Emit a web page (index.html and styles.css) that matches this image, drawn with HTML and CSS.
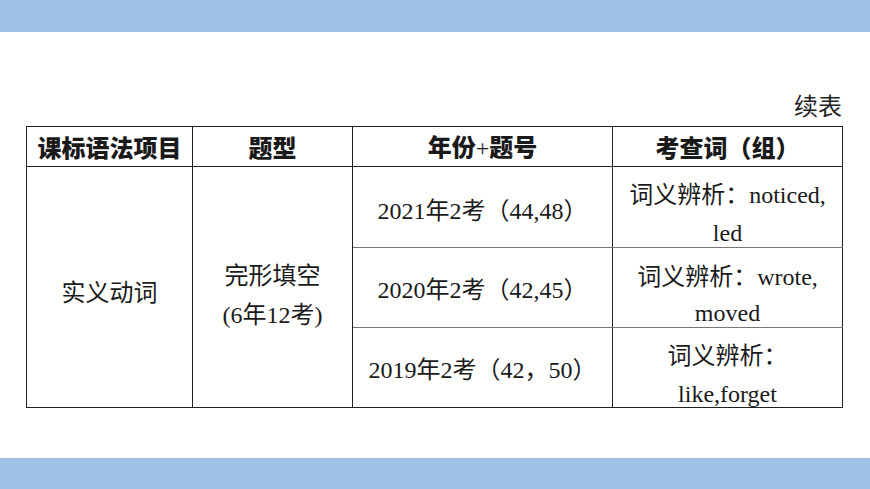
FILE: index.html
```html
<!DOCTYPE html>
<html lang="en">
<head>
<meta charset="utf-8">
<link rel="stylesheet" href="styles.css">
</head>
<body>
<div class="page">
  <div class="bar bar-top"></div>
  <main class="content">
    <div class="caption">续表</div>
    <table class="grid">
      <colgroup>
        <col class="c1"><col class="c2"><col class="c3"><col class="c4">
      </colgroup>
      <thead>
        <tr class="head">
          <th>课标语法项目</th>
          <th>题型</th>
          <th>年份<span class="plus">+</span>题号</th>
          <th>考查词（组）</th>
        </tr>
      </thead>
      <tbody>
        <tr class="r1">
          <td rowspan="3" class="cat">实义动词</td>
          <td rowspan="3" class="type">完形填空<br><span class="lat">(6</span>年<span class="lat">12</span>考<span class="lat">)</span></td>
          <td class="year"><div class="box"><span class="lat">2021</span>年<span class="lat">2</span>考（<span class="lat">44,48</span>）</div></td>
          <td class="word"><div class="box"><div><span>词义辨析：</span><span class="lat">noticed,</span></div><div><span class="lat">led</span></div></div></td>
        </tr>
        <tr class="r2">
          <td class="year"><div class="box"><span class="lat">2020</span>年<span class="lat">2</span>考（<span class="lat">42,45</span>）</div></td>
          <td class="word"><div class="box"><div>词义辨析：<span class="lat">wrote,</span></div><div><span class="lat">moved</span></div></div></td>
        </tr>
        <tr class="r3">
          <td class="year"><div class="box"><span class="lat">2019</span>年<span class="lat">2</span>考（<span class="lat">42</span>，<span class="lat">50</span>）</div></td>
          <td class="word"><div class="box"><div>词义辨析：</div><div><span class="lat">like,forget</span></div></div></td>
        </tr>
      </tbody>
    </table>
  </main>
  <div class="bar bar-bottom"></div>
</div>
</body>
</html>
```

FILE: styles.css
```css
html, body {
  margin: 0;
  padding: 0;
  background: #ffffff;
}
.page {
  width: 870px;
  height: 489px;
  display: flex;
  flex-direction: column;
  overflow: hidden;
}
.bar {
  background: #9fc3e7;
  flex: none;
}
.bar-top {
  height: 32px;
}
.bar-bottom {
  height: 31px;
}
.content {
  flex: 1;
  padding: 56px 28px 0 26px;
  display: flex;
  flex-direction: column;
}
.caption {
  align-self: flex-end;
  font-family: "Noto Sans CJK SC", sans-serif;
  font-size: 24px;
  line-height: 34px;
  color: #222;
  margin-bottom: 4px;
}
.grid {
  border-collapse: collapse;
  table-layout: fixed;
  width: 816px;
  color: #1a1a1a;
  font-family: "Noto Sans CJK SC", sans-serif;
  font-size: 24px;
}
.lat, .plus {
  font-family: "Liberation Serif", "Times New Roman", serif;
}
.c1 { width: 166px; }
.c2 { width: 160px; }
.c3 { width: 260px; }
.c4 { width: 230px; }
.grid th, .grid td {
  border: 1px solid #222;
  text-align: center;
  vertical-align: middle;
  padding: 0;
}
.head th {
  height: 39px;
  font-weight: 900;
  font-size: 24px;
  line-height: 30px;
}
.plus {
  font-weight: normal;
}
.cat {
  line-height: 37px;
  padding-top: 6px !important;
}
.type {
  line-height: 39px;
  padding-top: 14px !important;
}
.r1 td.year, .r1 td.word, .r2 td { border-bottom-color: #777; }
.box {
  box-sizing: border-box;
  display: flex;
  flex-direction: column;
  justify-content: center;
  align-items: center;
  overflow: visible;
}
.r1 .box { height: 80px; }
.r2 .box { height: 79px; }
.r3 .box { height: 79px; }
.year .box {
  line-height: 30px;
  white-space: nowrap;
  display: block;
  padding-top: 25px;
}
.r1 .year .box { padding-top: 27px; }
.word .box {
  padding-top: 10px;
}
.word .box > div {
  height: 38px;
  line-height: 38px;
  white-space: nowrap;
}
.r2 .word .box > div { height: 36px; line-height: 36px; }
```
